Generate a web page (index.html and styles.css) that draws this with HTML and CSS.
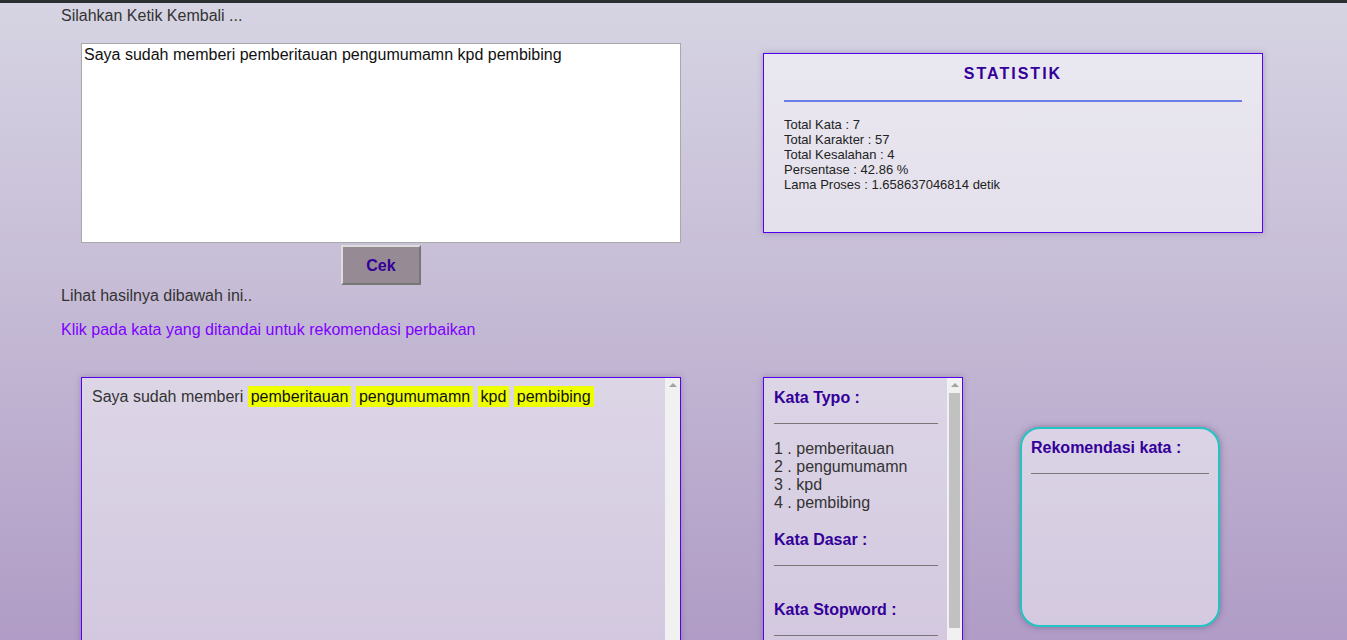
FILE: index.html
```html
<!DOCTYPE html>
<html>
<head>
<meta charset="utf-8">
<link rel="stylesheet" href="styles.css">
</head>
<body>
<div class="topbar"></div>
<div class="page">
  <p class="intro">Silahkan Ketik Kembali ...</p>
  <div class="row1">
    <div class="input-col">
      <div class="textarea">Saya sudah memberi pemberitauan pengumumamn kpd pembibing</div>
      <button class="cek">Cek</button>
    </div>
    <div class="stat">
      <h2 class="stat-title">STATISTIK</h2>
      <div class="stat-line"></div>
      <div class="stat-list">
        <div>Total Kata : 7</div>
        <div>Total Karakter : 57</div>
        <div>Total Kesalahan : 4</div>
        <div>Persentase : 42.86 %</div>
        <div>Lama Proses : 1.658637046814 detik</div>
      </div>
    </div>
  </div>
  <p class="lihat">Lihat hasilnya dibawah ini..</p>
  <p class="klik">Klik pada kata yang ditandai untuk rekomendasi perbaikan</p>
  <div class="row2">
    <div class="result">
      <div class="result-body">Saya sudah memberi <span class="typo">pemberitauan</span> <span class="typo">pengumumamn</span> <span class="typo">kpd</span> <span class="typo">pembibing</span></div>
      <div class="sbar"><div class="arrow"></div></div>
    </div>
    <div class="typo-box">
      <div class="typo-body">
        <div class="sec-title">Kata Typo :</div>
        <div class="sep"></div>
        <div class="list">
          <div>1 . pemberitauan</div>
          <div>2 . pengumumamn</div>
          <div>3 . kpd</div>
          <div>4 . pembibing</div>
        </div>
        <div class="sec-title t2">Kata Dasar :</div>
        <div class="sep"></div>
        <div class="sec-title t3">Kata Stopword :</div>
        <div class="sep"></div>
      </div>
      <div class="sbar"><div class="arrow"></div><div class="thumb"></div></div>
    </div>
    <div class="rekom">
      <div class="sec-title">Rekomendasi kata :</div>
      <div class="sep"></div>
    </div>
  </div>
</div>
</body>
</html>
```

FILE: styles.css
```css
html, body {
  margin: 0;
  height: 100%;
}
body {
  font-family: "Liberation Sans", Arial, sans-serif;
  color: #333;
  background: linear-gradient(to bottom, #d6d4e3 0%, #c6bcd6 45%, #b09cc6 100%);
  overflow: hidden;
}
.topbar {
  height: 3px;
  background: #2b2f31;
}
.page {
  padding-left: 61px;
}
.intro {
  margin: 0;
  padding-top: 4px;
  font-size: 16px;
  line-height: 18px;
}
.row1 {
  display: flex;
  align-items: flex-start;
  margin-top: 18px;
  padding-left: 20px;
}
.input-col {
  display: flex;
  flex-direction: column;
  align-items: center;
  width: 600px;
}
.textarea {
  box-sizing: border-box;
  width: 600px;
  height: 200px;
  background: #fff;
  border: 1px solid #a9a9a9;
  padding: 2px 2px;
  font-size: 16px;
  line-height: 18px;
  color: #111;
}
.cek {
  margin-top: 2px;
  width: 80px;
  height: 40px;
  padding: 2px 0 0;
  background: #968a94;
  border: 2px solid;
  border-color: #ddd #777 #777 #ddd;
  font-family: "Liberation Sans", Arial, sans-serif;
  font-weight: bold;
  font-size: 16px;
  color: #330099;
}
.stat {
  box-sizing: border-box;
  margin-left: 82px;
  margin-top: 10px;
  width: 500px;
  height: 180px;
  border: 1px solid #5500ee;
  background: rgba(255, 255, 255, 0.5);
  box-shadow: 0 0 6px rgba(80, 60, 110, 0.35);
  padding: 10px 20px;
}
.stat-title {
  margin: 0;
  text-align: center;
  font-size: 16px;
  line-height: 20px;
  letter-spacing: 2px;
  color: #330099;
}
.stat-line {
  margin-top: 16px;
  height: 2px;
  background: #6e7ee9;
}
.stat-list {
  margin-top: 15px;
  font-size: 13px;
  line-height: 15px;
  color: #222;
}
.lihat {
  margin: 0;
  margin-top: 2px;
  font-size: 16px;
  line-height: 18px;
}
.klik {
  margin: 0;
  margin-top: 16px;
  font-size: 16px;
  line-height: 18px;
  color: #7f00ff;
}
.row2 {
  display: flex;
  align-items: flex-start;
  margin-top: 38px;
  padding-left: 20px;
}
.result {
  box-sizing: border-box;
  width: 600px;
  height: 280px;
  display: flex;
  border: 1px solid #5500ee;
  background: rgba(255, 255, 255, 0.45);
  box-shadow: 0 0 6px rgba(80, 60, 110, 0.35);
}
.result-body {
  flex: 1;
  padding: 9px 10px;
  font-size: 16px;
  line-height: 20px;
  color: #333;
}
.typo {
  background: #eeff00;
  color: #111;
  padding: 2px 3px;
}
.sbar {
  width: 15px;
  flex: none;
  background: #f1f1f1;
  display: flex;
  flex-direction: column;
  align-items: center;
}
.arrow {
  margin-top: 5px;
  width: 0;
  height: 0;
  border-left: 4px solid transparent;
  border-right: 4px solid transparent;
  border-bottom: 4px solid #a3a3a3;
}
.thumb {
  margin-top: 6px;
  width: 11px;
  height: 235px;
  background: #c1c1c1;
}
.typo-box {
  box-sizing: border-box;
  margin-left: 82px;
  width: 200px;
  height: 280px;
  display: flex;
  border: 1px solid #5500ee;
  background: rgba(255, 255, 255, 0.45);
  box-shadow: 0 0 6px rgba(80, 60, 110, 0.35);
}
.typo-body {
  flex: 1;
  padding: 10px 9px 0 10px;
}
.sec-title {
  font-weight: bold;
  font-size: 16px;
  line-height: 20px;
  color: #330099;
}
.sep {
  margin-top: 15px;
  height: 1px;
  background: #777;
}
.list {
  margin-top: 16px;
  font-size: 16px;
  line-height: 18px;
  color: #333;
}
.t2 {
  margin-top: 18px;
}
.t3 {
  margin-top: 34px;
}
.rekom {
  box-sizing: border-box;
  margin-left: 57px;
  margin-top: 50px;
  width: 200px;
  height: 200px;
  border: 2px solid #22c3c3;
  border-radius: 20px;
  background: rgba(255, 255, 255, 0.45);
  box-shadow: 0 0 6px rgba(80, 60, 110, 0.5);
  padding: 9px 9px 0 9px;
}
```
